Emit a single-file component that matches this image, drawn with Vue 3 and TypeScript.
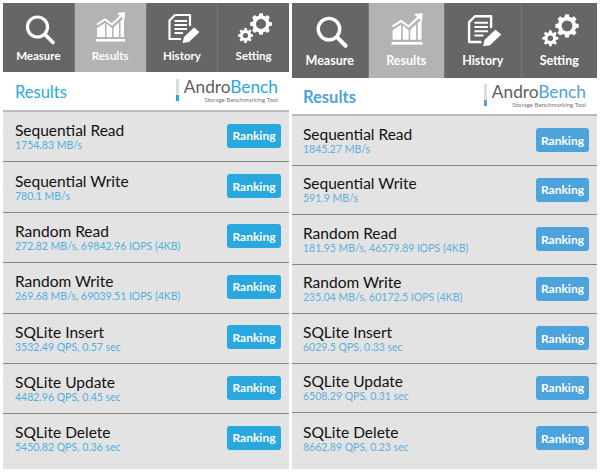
<script setup lang="ts">
interface Row {
  name: string;
  value: string;
}

interface Phone {
  id: string;
  rows: Row[];
}

const tabs = ['Measure', 'Results', 'History', 'Setting'];

const names = [
  'Sequential Read',
  'Sequential Write',
  'Random Read',
  'Random Write',
  'SQLite Insert',
  'SQLite Update',
  'SQLite Delete',
];

function makeRows(values: string[]): Row[] {
  return values.map((value, i) => ({ name: names[i], value }));
}

const phones: Phone[] = [
  {
    id: 'left',
    rows: makeRows([
      '1754.83 MB/s',
      '780.1 MB/s',
      '272.82 MB/s, 69842.96 IOPS (4KB)',
      '269.68 MB/s, 69039.51 IOPS (4KB)',
      '3532.49 QPS, 0.57 sec',
      '4482.96 QPS, 0.45 sec',
      '5450.82 QPS, 0.36 sec',
    ]),
  },
  {
    id: 'right',
    rows: makeRows([
      '1845.27 MB/s',
      '591.9 MB/s',
      '181.95 MB/s, 46579.89 IOPS (4KB)',
      '235.04 MB/s, 60172.5 IOPS (4KB)',
      '6029.5 QPS, 0.33 sec',
      '6508.29 QPS, 0.31 sec',
      '8662.89 QPS, 0.23 sec',
    ]),
  },
];

// outline of a toothed wheel with a round hole, for the Setting tab
function gearPath(cx: number, cy: number, outer: number, root: number, hole: number): string {
  const teeth = 8;
  const step = (Math.PI * 2) / teeth;
  const pts: string[] = [];
  for (let i = 0; i < teeth; i++) {
    const a = i * step;
    const corners: [number, number][] = [
      [root, a - step * 0.34],
      [outer, a - step * 0.2],
      [outer, a + step * 0.2],
      [root, a + step * 0.34],
    ];
    for (const [r, t] of corners) {
      pts.push(`${(cx + r * Math.cos(t)).toFixed(2)} ${(cy + r * Math.sin(t)).toFixed(2)}`);
    }
  }
  const ring = `M${cx - hole} ${cy} a${hole} ${hole} 0 1 0 ${hole * 2} 0 a${hole} ${hole} 0 1 0 ${-hole * 2} 0 Z`;
  return `M${pts.join(' L')} Z ${ring}`;
}

const gears = gearPath(27, 12, 11, 8.6, 5) + ' ' + gearPath(11.5, 23.5, 7.5, 5.6, 2.6);
</script>

<template>
  <div class="page">
    <section v-for="phone in phones" :key="phone.id" class="phone" :class="phone.id">
      <nav class="tabs">
        <div v-for="tab in tabs" :key="tab" class="tab" :class="{ active: tab === 'Results' }">
          <svg class="icon" viewBox="0 0 40 34" fill="none" stroke="#fff">
            <g v-if="tab === 'Measure'">
              <circle cx="19.500" cy="15" r="10" stroke-width="3.2" />
              <path d="M27 22.500 L35 30.500" stroke-width="3.800" stroke-linecap="round" />
            </g>
            <g v-else-if="tab === 'Results'">
              <path d="M7 12.500 L15 7.500 L22 12.500 L32 3" stroke-width="2" />
              <path d="M27 1 L35 0 L34.500 8 Z" fill="#fff" stroke="none" />
              <g fill="#fff" stroke="none">
                <path d="M7 16 L15 11 V25 H7 Z" />
                <path d="M16.500 11.500 L22 16 V25 H16.500 Z" />
                <path d="M23.500 15.500 L29 10.500 V25 H23.500 Z" />
                <path d="M30.500 9 L34 6 V25 H30.500 Z" />
                <rect x="6" y="27" width="29" height="2.500" />
              </g>
            </g>
            <g v-else-if="tab === 'History'">
              <path d="M28 14 V3 H13 L7.500 8.500 V27 H19" stroke-width="2.200" stroke-linejoin="round" />
              <path d="M12.500 9 H25 M12.500 13 H25 M12.500 17 H25 M12.500 21 H21" stroke-width="1.800" />
              <path d="M20.500 31 L22 25 L32 15.500 L37.500 20 L27 30 Z" fill="#fff" stroke="none" />
            </g>
            <path v-else :d="gears" fill="#fff" fill-rule="evenodd" stroke="none" />
          </svg>
          <span class="tab-label">{{ tab }}</span>
        </div>
      </nav>

      <header class="head">
        <h1 class="title">Results</h1>
        <div class="logo">
          <span class="logo-bar"></span>
          <div class="logo-text">
            <div class="logo-name">Andro<em>Bench</em></div>
            <div class="logo-sub">Storage Benchmarking Tool</div>
          </div>
        </div>
      </header>

      <ul class="rows">
        <li v-for="row in phone.rows" :key="row.name" class="row">
          <div class="info">
            <div class="name">{{ row.name }}</div>
            <div class="value">{{ row.value }}</div>
          </div>
          <button class="ranking" type="button">Ranking</button>
        </li>
      </ul>
    </section>
  </div>
</template>

<style>
html,
body {
  margin: 0;
  background: #fff;
}
</style>

<style scoped>
.page {
  width: 600px;
  height: 472px;
  box-sizing: border-box;
  padding: 3px;
  display: flex;
  gap: 3px;
  background: #fff;
  font-family: Lato, "Noto Sans", sans-serif;
}

.phone {
  display: flex;
  flex-direction: column;
}

.left {
  width: 286px;
  --tab-h: 69px;
  --head-h: 38px;
  --row-h: 50.4px;
  --accent: #29a8e0;
  --value: #4fb0e0;
  --pad-left: 12px;
}

.right {
  width: 305px;
  --tab-h: 75px;
  --head-h: 36px;
  --row-h: 49.5px;
  --accent: #4da3dc;
  --value: #62aedd;
  --pad-left: 11px;
}

.tabs {
  display: flex;
  height: var(--tab-h);
  gap: 1px;
  background: #777;
}

.tab {
  flex: 1;
  background: #666;
  color: #fff;
  display: flex;
  flex-direction: column;
  align-items: center;
  justify-content: flex-end;
  padding-bottom: 9px;
  box-sizing: border-box;
}

.right .tab {
  padding-bottom: 10px;
}

.tab.active {
  background: #b3b3b3;
}

.icon {
  width: 40px;
  height: 34px;
  margin-bottom: 3px;
  overflow: visible;
}

.right .icon {
  width: 43px;
  height: 36.5px;
  margin-bottom: 5px;
}

.tab-label {
  font-size: 11.5px;
  line-height: 14px;
  font-weight: 700;
}

.right .tab-label {
  font-size: 12.5px;
}

.head {
  height: var(--head-h);
  display: flex;
  align-items: center;
  justify-content: space-between;
  padding: 0 11px 0 var(--pad-left);
  border-bottom: 2px solid #bbb;
}

.title {
  margin: 2px 0 0;
  font-size: 16.5px;
  font-weight: 400;
  color: var(--accent);
}

.right .title {
  font-weight: 700;
}

.logo {
  display: flex;
  gap: 5px;
}

.logo-bar {
  width: 3px;
  height: 22px;
  background: linear-gradient(#ddd 0 72%, var(--accent) 72%);
}

.logo-text {
  display: flex;
  flex-direction: column;
  align-items: flex-end;
}

.logo-name {
  font-size: 17.3px;
  line-height: 15px;
  color: #5e5e5e;
}

.logo-name em {
  font-style: normal;
  color: var(--accent);
}

.logo-sub {
  margin-top: 2px;
  font-size: 6.2px;
  line-height: 7px;
  color: #777;
}

.rows {
  flex: 1;
  list-style: none;
  margin: 0;
  padding: 0;
  display: flex;
  flex-direction: column;
  background: #e3e3e3;
}

.row {
  height: var(--row-h);
  flex: none;
  box-sizing: border-box;
  display: flex;
  align-items: center;
  justify-content: space-between;
  padding: 0 8px 0 var(--pad-left);
  border-bottom: 1px solid #858585;
}

.row:last-child {
  flex: 1;
  border-bottom: 0;
  padding-bottom: 6px;
}

.name {
  font-size: 15.5px;
  line-height: 18px;
  color: #111;
}

.value {
  font-size: 10.5px;
  line-height: 13px;
  color: var(--value);
}

.ranking {
  width: 54px;
  height: 24px;
  margin-bottom: 2px;
  padding: 0;
  border: 0;
  border-radius: 3px;
  background: var(--accent);
  color: #fff;
  font: 700 12px Lato, sans-serif;
}

.right .ranking {
  width: 53px;
  margin-bottom: 0;
}
</style>
